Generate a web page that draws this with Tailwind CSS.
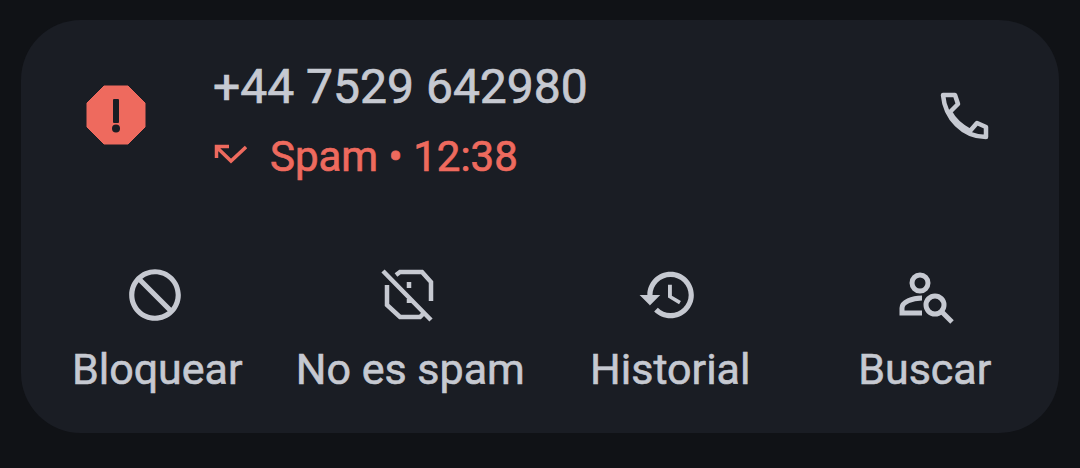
<!DOCTYPE html>
<html><head><meta charset="utf-8"><script src="https://cdn.jsdelivr.net/npm/@tailwindcss/browser@4"></script></head>
<body class="m-0 bg-[#101216]">
<div class="w-[1080px] h-[468px] pt-[20px] pl-[21px] font-['Roboto',sans-serif]">
  <div class="w-[1038px] h-[413px] rounded-[60px] bg-[#1a1d24] flex flex-col">
    <div class="flex items-start h-[244px]">
      <svg class="ml-[65px] mt-[65px] w-[60px] h-[60px]" viewBox="0 0 60 60"><path d="M18 1H42L59 18V42L42 59H18L1 42V18Z" fill="#ee6a5e" stroke="#ee6a5e" stroke-width="1" stroke-linejoin="round"/><rect x="27" y="14" width="6" height="24" rx="1" fill="#1a1d24"/><circle cx="30" cy="43.500" r="4" fill="#1a1d24"/></svg>
      <div class="ml-[67px] mt-[38px] flex flex-col">
        <div class="text-[48px] leading-[58px] [-webkit-text-stroke:0.7px_#c6c9d1] text-[#c6c9d1] whitespace-nowrap">+44 7529 642980</div>
        <div class="flex items-center mt-[16px] h-[50px]">
          <svg class="w-[34px] h-[24px] mr-[23px] mb-[6px]" viewBox="0 0 34 24"><path d="M16 4.500H3.500V16M4 5.500L18 19L33 5" fill="none" stroke="#ee6a5e" stroke-width="3.500"/></svg>
          <span class="text-[42px] leading-[50px] [-webkit-text-stroke:0.7px_#ee6a5e] text-[#ee6a5e] whitespace-nowrap">Spam • 12:38</span>
        </div>
      </div>
      <svg class="ml-auto mr-[68px] mt-[70px] w-[52px] h-[54px]" viewBox="0 0 52 54"><path d="M4 5H16L19 14L11 22C15 30 22 36 31 41L38 33L47 37V47C24 47 6 28 4 5Z" fill="none" stroke="#c6c9d1" stroke-width="4.500" stroke-linejoin="round"/></svg>
    </div>
    <div class="grid grid-cols-4 w-[1026px] ml-[6px]">
      <div class="flex flex-col items-center">
        <svg class="w-[62px] h-[62px] -scale-x-100" viewBox="0 0 24 24" fill="#c6c9d1"><path d="M12 2C6.48 2 2 6.48 2 12s4.48 10 10 10 10-4.48 10-10S17.52 2 12 2zM4 12c0-4.42 3.58-8 8-8 1.85 0 3.55.63 4.9 1.69L5.69 16.9C4.63 15.55 4 13.85 4 12zm8 8c-1.85 0-3.55-.63-4.9-1.69L18.31 7.1C19.37 8.45 20 10.15 20 12c0 4.42-3.58 8-8 8z"/></svg>
        <span class="mt-[18px] ml-[4px] text-[43px] leading-[50px] [-webkit-text-stroke:0.6px_#c6c9d1] text-[#c6c9d1] whitespace-nowrap">Bloquear</span>
      </div>
      <div class="flex flex-col items-center">
        <svg class="w-[62px] h-[62px]" viewBox="0 0 62 62" fill="none" stroke="#c6c9d1" stroke-width="4.500"><path d="M15 11L19 8H41L50 18V37M6 21V41L19 53H39L43 49M2 7L50 56M28 18V24M28 35V39"/></svg>
        <span class="mt-[18px] mr-[3px] text-[43px] leading-[50px] [-webkit-text-stroke:0.6px_#c6c9d1] text-[#c6c9d1] whitespace-nowrap">No es spam</span>
      </div>
      <div class="flex flex-col items-center">
        <svg class="w-[62px] h-[62px]" viewBox="0 0 24 24" fill="#c6c9d1"><path d="M13 3c-4.97 0-9 4.03-9 9H1l3.89 3.89.07.14L9 12H6c0-3.87 3.13-7 7-7s7 3.13 7 7-3.13 7-7 7c-1.93 0-3.68-.79-4.94-2.06l-1.42 1.42C8.27 19.99 10.51 21 13 21c4.97 0 9-4.03 9-9s-4.03-9-9-9zm-1 5v5l4.28 2.54.72-1.21-3.5-2.08V8H12z"/></svg>
        <span class="mt-[18px] ml-[4px] text-[43px] leading-[50px] [-webkit-text-stroke:0.6px_#c6c9d1] text-[#c6c9d1] whitespace-nowrap">Historial</span>
      </div>
      <div class="flex flex-col items-center">
        <svg class="w-[62px] h-[62px]" viewBox="0 0 62 62" fill="none" stroke="#c6c9d1" stroke-width="5"><circle cx="26" cy="19" r="8"/><path d="M28 34C18 34 8 38 8 44V49H28"/><circle cx="41" cy="41" r="9"/><path d="M48 48L58 58"/></svg>
        <span class="mt-[18px] text-[43px] leading-[50px] [-webkit-text-stroke:0.6px_#c6c9d1] text-[#c6c9d1] whitespace-nowrap">Buscar</span>
      </div>
    </div>
  </div>
</div>
</body></html>
